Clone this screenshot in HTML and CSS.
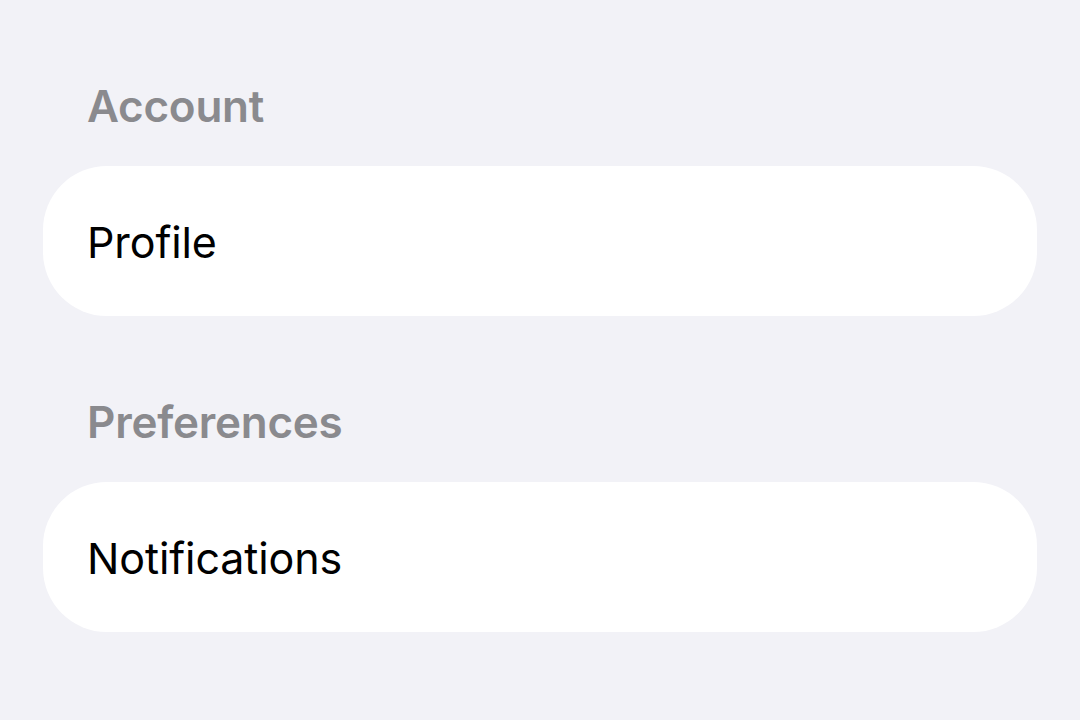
FILE: index.html
```html
<!DOCTYPE html>
<html lang="en">
<head>
<meta charset="utf-8">
<title>Settings</title>
<link rel="stylesheet" href="styles.css">
</head>
<body>
<main class="settings">
  <section class="group">
    <h2 class="group-title">Account</h2>
    <div class="card">
      <div class="row">Profile</div>
    </div>
  </section>
  <section class="group">
    <h2 class="group-title">Preferences</h2>
    <div class="card">
      <div class="row">Notifications</div>
    </div>
  </section>
</main>
</body>
</html>
```

FILE: styles.css
```css
html, body {
  margin: 0;
  padding: 0;
  background: #f2f2f7;
  width: 1080px;
  height: 720px;
  overflow: hidden;
}

body {
  font-family: Inter, "Noto Sans", "Liberation Sans", sans-serif;
}

.settings {
  padding: 80px 43px 0 43px;
  display: flex;
  flex-direction: column;
  gap: 80px;
}

.group {
  display: flex;
  flex-direction: column;
}

.group-title {
  margin: 0 0 34px 44px;
  font-size: 44px;
  line-height: 52px;
  font-weight: 600;
  color: #8a8a8e;
  letter-spacing: -0.25px;
}

.card {
  background: #ffffff;
  border-radius: 64px;
  height: 150px;
  display: flex;
  align-items: center;
}

.row {
  padding: 2px 44px 0 44px;
  font-size: 43px;
  font-weight: 400;
  color: #000000;
  letter-spacing: -0.1px;
}
```
